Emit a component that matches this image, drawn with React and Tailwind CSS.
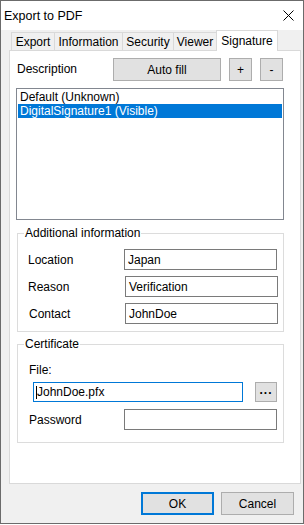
import React from "react";

const tabs = [
  { label: "Export", w: "w-[44px]" },
  { label: "Information", w: "w-[69px]" },
  { label: "Security", w: "w-[52px]" },
  { label: "Viewer", w: "w-[44px]" },
];

function TextBox({ value, className = "" }) {
  return (
    <div className={`h-[21px] border border-[#7a7a7a] bg-white pl-[3px] flex items-center ${className}`}>
      {value}
    </div>
  );
}

function Button({ children, className = "" }) {
  return (
    <div className={`h-[23px] border border-[#adadad] bg-[#e1e1e1] flex items-center justify-center ${className}`}>
      {children}
    </div>
  );
}

export default function App() {
  return (
    <div className="w-[304px] h-[524px] bg-[#f0f0f0] border border-[#6b6b6b] flex flex-col font-['Liberation_Sans',Arial,sans-serif] text-[12px] text-black leading-[16px]">
      {/* Title bar */}
      <div className="h-[29px] bg-white flex items-center justify-between pl-[3px] pr-[9px]">
        <span className="text-[12.5px]">Export to PDF</span>
        <svg width="11" height="11" viewBox="0 0 11 11" className="text-black">
          <path d="M0.5 0.5 L10.5 10.5 M10.5 0.5 L0.5 10.5" stroke="currentColor" strokeWidth="1" />
        </svg>
      </div>

      {/* Tabs */}
      <div className="flex items-end pl-[10px] h-[20px]">
        {tabs.map((t, i) => (
          <div
            key={t.label}
            className={`${t.w} h-[18px] border border-b-0 border-[#d9d9d9] bg-[#f0f0f0] flex items-center justify-center pt-[1px] ${i > 0 ? "-ml-px" : ""}`}
          >
            {t.label}
          </div>
        ))}
        <div className="w-[62px] h-[21px] -ml-px -mb-px relative z-10 border border-b-0 border-[#d9d9d9] bg-white flex items-start justify-center pt-[2px]">
          Signature
        </div>
      </div>

      {/* Panel */}
      <div className="ml-[8px] w-[292px] h-[434px] border border-[#d9d9d9] bg-white flex flex-col pl-[6px]">
        <div className="flex items-center mt-[7px]">
          <span className="ml-[1px] w-[96px] -mt-[1px]">Description</span>
          <Button className="w-[108px]">Auto fill</Button>
          <Button className="w-[23px] ml-[8px]">+</Button>
          <Button className="w-[23px] ml-[8px]">-</Button>
        </div>

        {/* List */}
        <div className="mt-[7px] w-[268px] h-[132px] border border-[#828790] bg-white pt-[1px] px-[1px]">
          <div className="h-[14px] pl-[2px] flex items-center">Default (Unknown)</div>
          <div className="h-[14px] pl-[2px] flex items-center bg-[#0078d7] text-white">DigitalSignature1 (Visible)</div>
        </div>

        {/* Additional information */}
        <fieldset className="mt-[5px] ml-[1px] w-[267px] border border-[#dcdcdc] px-0 pb-[7px]">
          <legend className="ml-[6px] px-[1px]">Additional information</legend>
          <div className="flex flex-col gap-[6px] mt-[8px]">
            <div className="flex items-center">
              <span className="ml-[10px] w-[96px]">Location</span>
              <TextBox value="Japan" className="w-[153px]" />
            </div>
            <div className="flex items-center">
              <span className="ml-[10px] w-[97px]">Reason</span>
              <TextBox value="Verification" className="w-[153px]" />
            </div>
            <div className="flex items-center">
              <span className="ml-[11px] w-[96px]">Contact</span>
              <TextBox value="JohnDoe" className="w-[153px]" />
            </div>
          </div>
        </fieldset>

        {/* Certificate */}
        <fieldset className="mt-[4px] ml-[1px] w-[267px] border border-[#dcdcdc] px-0 pb-[12px]">
          <legend className="ml-[6px] px-[1px]">Certificate</legend>
          <div className="ml-[11px] mt-[10px]">File:</div>
          <div className="flex items-center mt-[4px] ml-[15px]">
            <div className="w-[210px] h-[20px] border border-[#0078d7] bg-white pl-[2px] flex items-center">
              <span className="w-px h-[13px] bg-black"></span>JohnDoe.pfx
            </div>
            <div className="ml-[12px] w-[22px] h-[20px] border border-[#adadad] bg-[#e1e1e1] flex items-center justify-center pb-[4px] font-bold tracking-[1px]">
              ...
            </div>
          </div>
          <div className="flex items-center mt-[7px]">
            <span className="ml-[11px] w-[95px]">Password</span>
            <div className="w-[153px] h-[21px] border border-[#7a7a7a] bg-white"></div>
          </div>
        </fieldset>
      </div>

      {/* Bottom buttons */}
      <div className="flex justify-end mt-[8px] pr-[9px] gap-[7px]">
        <div className="w-[73px] h-[23px] border-2 border-[#0078d7] bg-[#e1e1e1] flex items-center justify-center">OK</div>
        <Button className="w-[73px]">Cancel</Button>
      </div>
    </div>
  );
}
